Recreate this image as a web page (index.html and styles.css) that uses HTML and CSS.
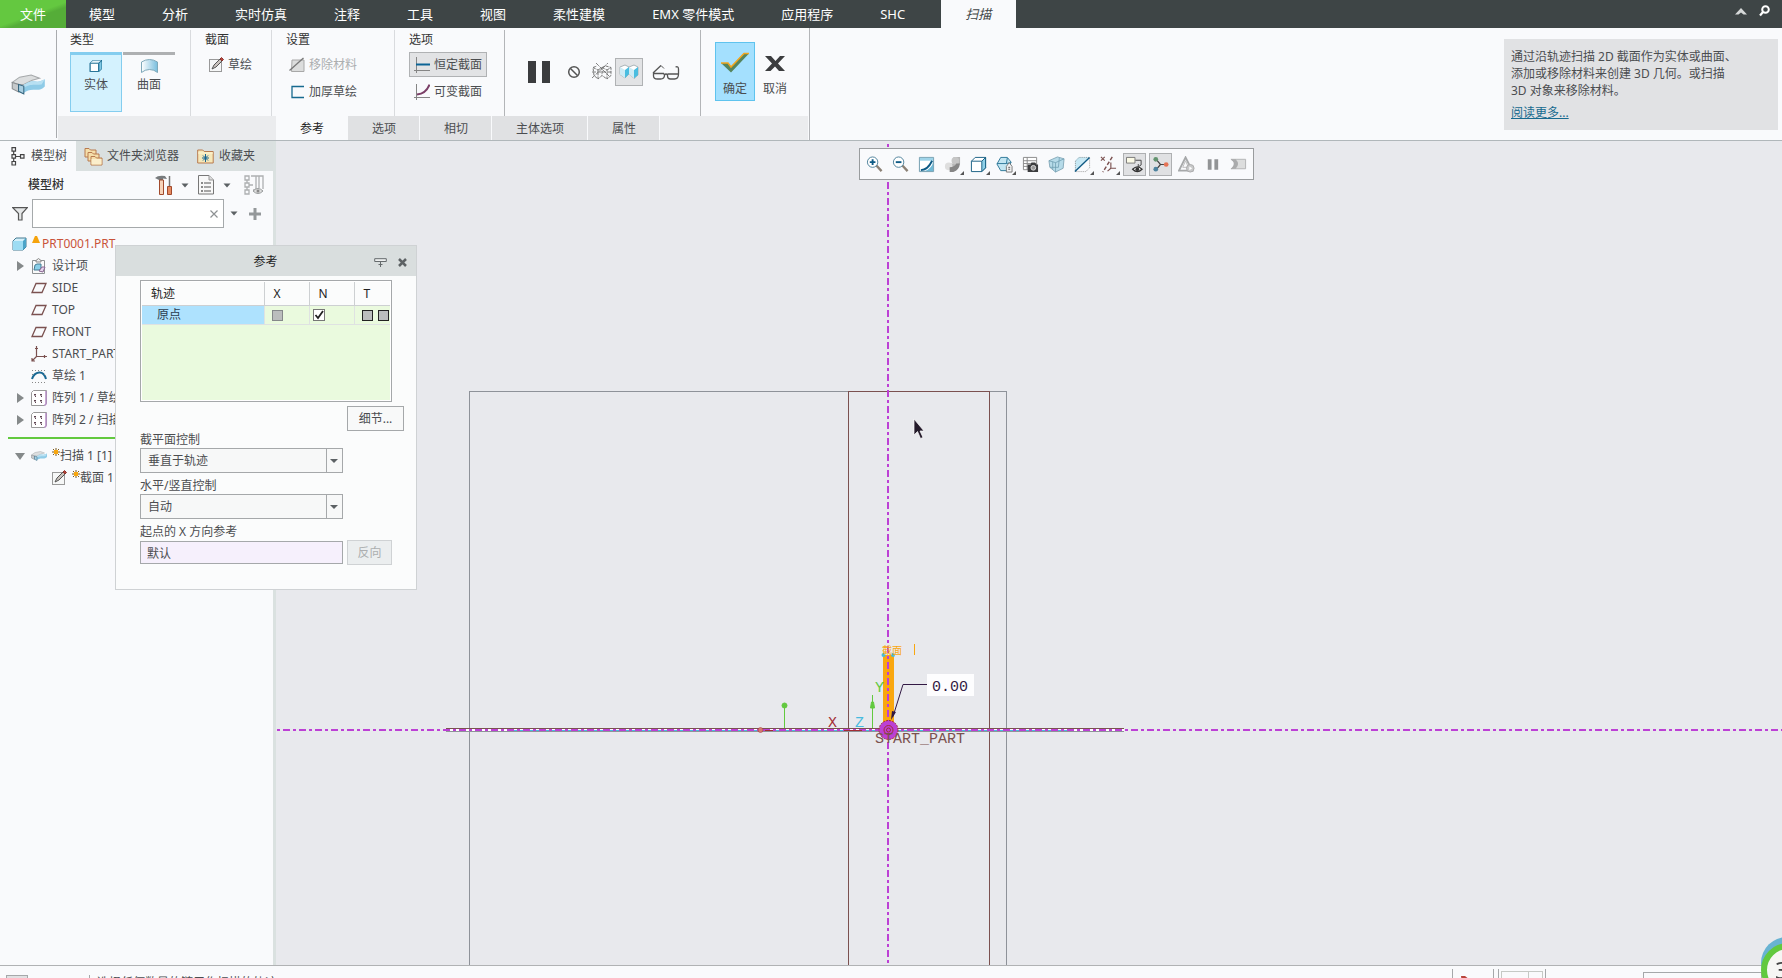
FILE: index.html
```html
<!DOCTYPE html>
<html lang="zh-CN">

<head>
    <meta charset="UTF-8" />
    <meta name="viewport" content="width=device-width, initial-scale=1.0" />
    <title>PRT0001 - 扫描</title>
    <link rel="stylesheet" href="styles.css">
</head>

<body>

    <!-- 公用图标 -->
    <svg class="sprite" aria-hidden="true">
        <symbol id="i-sketch" viewBox="0 0 16 16">
            <rect x="1.500" y="2.500" width="12" height="12" fill="#f6f7f7" stroke="#999" />
            <path d="M4 12l2-4 7-7 2 2-7 7z" fill="#c9c2bd" stroke="#555" />
            <path d="M12 2l1.500-1.500 2 2L14 4z" fill="#b8433a" stroke="#8a332c" />
        </symbol>
        <symbol id="i-sweep" viewBox="0 0 32 20">
            <path d="M1 8l7-5 11-2 8 3-7 2-8 4-5 0z" fill="#dcdedf" stroke="#a5a8aa" />
            <path d="M1 8l6 2v7l-6-3z" fill="#c6cacc" stroke="#8a8d90" />
            <path d="M12 10c3-1 6-4 10-3 4 1 6 0 10-2v7c-4 4-7 3-11 3-4 0-6 1-9 3z" fill="#8fcbe7" />
            <path d="M12 10c3-1 6-4 10-3 4 1 6 0 10-2l-3 5c-6 1-10-1-17 3z" fill="#b8e0f2" />
            <path d="M7 10l5 1.500v7.500l-5-2.500z" fill="#a9cfe2" stroke="#33647e" />
        </symbol>
        <symbol id="i-plane" viewBox="0 0 16 16">
            <path d="M5 3.500h10l-4 9H1z" fill="none" stroke="#7b5150" stroke-width="1.300" />
        </symbol>
        <symbol id="i-pattern" viewBox="0 0 16 16">
            <path d="M.5 2.500l2-2h13v13l-2 2H.5z" fill="#fff" stroke="#999" />
            <path d="M15 1v13l-1.500 1.500" fill="none" stroke="#b58cc4" stroke-width="1.500" />
            <path d="M3 4h2v1.500H3zM9 4h2v1.500H9zM3 10h2v1.500H3zM9 10h2v1.500H9zM4 6h1v1H4zM10 6h1v1h-1zM4 12h1v1H4zM10 12h1v1h-1z" fill="#5d4350" />
        </symbol>
        <symbol id="i-closed" viewBox="0 0 14 14"><path d="M4 2l7 5-7 5z" fill="#85898a" /></symbol>
        <symbol id="i-open" viewBox="0 0 14 14"><path d="M2 4h10l-5 7z" fill="#85898a" /></symbol>
        <symbol id="i-down" viewBox="0 0 8 5"><path d="M.5.5h7L4 4.500z" fill="#5c6164" /></symbol>
        <symbol id="i-star" viewBox="0 0 8 8">
            <path d="M4 0v8M0 4h8M1 1l6 6M7 1L1 7" stroke="#7d5a1c" stroke-width="1" />
            <rect x="2" y="2" width="4" height="4" fill="#f9a70f" />
        </symbol>
    </svg>

    <nav class="menubar">
        <button class="file-tab">文件</button>
        <button class="menu">模型</button>
        <button class="menu">分析</button>
        <button class="menu">实时仿真</button>
        <button class="menu">注释</button>
        <button class="menu">工具</button>
        <button class="menu">视图</button>
        <button class="menu">柔性建模</button>
        <button class="menu">EMX 零件模式</button>
        <button class="menu">应用程序</button>
        <button class="menu">SHC</button>
        <button class="menu active">扫描</button>
        <div class="menubar-tools">
            <button aria-label="最小化功能区"><svg width="12" height="7"><path d="M0 6.500L6 0l6 6.500H8.500L6 4.500l-2.500 2z" fill="#d5d8d8" /></svg></button>
            <button aria-label="搜索"><svg width="11" height="12"><circle cx="6.500" cy="4.500" r="3.300" fill="none" stroke="#fff" stroke-width="2" /><path d="M4 7l-3 3.500" stroke="#fff" stroke-width="2.200" /></svg></button>
        </div>
    </nav>

    <header class="ribbon">
        <div class="feature-icon"><svg width="34" height="21"><use href="#i-sweep" /></svg></div>

        <div class="dashboard">
            <div class="groups">
                <section class="group type-group">
                    <h2>类型</h2>
                    <div class="type-buttons">
                        <button class="type-btn selected">
                            <svg width="14" height="14"><path d="M.7 4L4 1h9v9l-3 3H.7z" fill="#176a8f" /><path d="M1.200 4.200h8.300v8.300H1.200z" fill="#fff" stroke="#2b7699" /><path d="M1.500 3.700L4.200 1.500h8L9.500 3.700z" fill="#e6f4fa" /><path d="M10.300 4.200l2.200-2v7.500l-2.200 2.200z" fill="#80c8e4" /></svg>
                            <span>实体</span>
                        </button>
                        <button class="type-btn">
                            <svg width="17" height="14"><defs><linearGradient id="surf"><stop offset="0" stop-color="#fff" /><stop offset="1" stop-color="#79bede" /></linearGradient></defs><path d="M.5 3Q8.500-2 16.500 3v10.500Q13 10.500 8.500 10.500T.5 13.500z" fill="url(#surf)" stroke="#7fa9ba" /></svg>
                            <span>曲面</span>
                        </button>
                    </div>
                </section>

                <section class="group section-group">
                    <h2>截面</h2>
                    <button class="tool"><svg width="16" height="16"><use href="#i-sketch" /></svg>草绘</button>
                </section>

                <section class="group setting-group">
                    <h2>设置</h2>
                    <button class="tool" disabled><svg width="16" height="16"><path d="M3 3h12v11.500H2.500z" fill="#dcdddd" stroke="#a8a8a8" /><path d="M.5 13.500L14.500 1" stroke="#777" stroke-width="1.300" /></svg>移除材料</button>
                    <button class="tool"><svg width="16" height="16"><path d="M15 2.500H3v11h12" fill="none" stroke="#176a8f" stroke-width="1.300" /></svg>加厚草绘</button>
                </section>

                <section class="group option-group">
                    <h2>选项</h2>
                    <button class="tool pressed"><svg width="16" height="16"><path d="M2.500 0v16M0 13.500h16" stroke="#858585" /><path d="M2 7.500h14" stroke="#0c6496" stroke-width="2" /></svg>恒定截面</button>
                    <button class="tool"><svg width="16" height="16"><path d="M2.500 0v16M0 13.500h16" stroke="#858585" /><path d="M3 10.500q9-1 12.500-10" fill="none" stroke="#7b3f67" stroke-width="2" /></svg>可变截面</button>
                </section>

                <section class="group preview-group">
                    <button aria-label="暂停"><svg width="24" height="24"><path d="M1 1h8v22H1zM15 1h8v22h-8z" fill="#3b3c3e" /></svg></button>
                    <button aria-label="无预览"><svg width="14" height="14"><circle cx="7" cy="7" r="5.300" fill="none" stroke="#555" stroke-width="1.500" /><path d="M3.500 3.500l7 7" stroke="#555" stroke-width="1.500" /></svg></button>
                    <button aria-label="分离"><svg width="20" height="18"><path d="M1 4.500L6 7v9l-4-3.500zM6 7l4-2.500v8L6 16M10 4.500L15 7v9l-5-3.500M15 7l4-2.500v8L15 16M1 4.500L5 3M10 4.500L14 3l5 1.500" fill="none" stroke="#777" stroke-dasharray="3 1" /><path d="M0 15L16 0M4 0l14 14M0 9h20" fill="none" stroke="#626262" stroke-width=".8" stroke-dasharray="4 1" /></svg></button>
                    <button class="pressed" aria-label="连接"><svg width="20" height="16"><path d="M1 3l5-2 4 2v7l-4 4-5-3.500zM10 3l5-2 4 2v8l-4 3.500-5-5z" fill="#fff" stroke="#aab4b8" /><path d="M6 6l4-3v7l-4 4zM15 6l4-3v8l-4 3.500z" fill="#49bde0" /><path d="M1 3l5 3v8l-5-3.500zM10 3l5 3v8l-5-4z" fill="#cdebf5" /></svg></button>
                    <button aria-label="特征预览"><svg width="28" height="16"><path d="M1 9L9 1.500M1.500 9v3q0 3 4 3h3q4 0 4-4l-1-1.500H1.500M15.500 10v2q0 3 3 3h4q4 0 4-5H15.500M12.500 11q1.500-2 3 0M26.500 10V5q0-3-3-2" fill="none" stroke="#555" stroke-width="1.300" /><path d="M9 1.500l3 3" stroke="#555" /></svg></button>
                </section>

                <section class="group confirm-group">
                    <button class="ok-btn"><svg width="30" height="22"><path d="M1 11h7l3 4L24 1.500h5L11 20.500z" fill="#55855d" /><path d="M1 11h7l3 4L24 1.500h5" fill="none" stroke="#f2a51c" stroke-width="1.500" /></svg><span>确定</span></button>
                    <button class="cancel-btn"><svg width="20" height="18"><path d="M0 1h6l4.500 5L15 1h5l-7 7.500L20 16h-6l-4-4.500L5.500 16H0l7-7.500z" fill="#3c3d3f" /></svg><span>取消</span></button>
                </section>
            </div>

            <div class="panel-tabs">
                <button class="active">参考</button>
                <button>选项</button>
                <button>相切</button>
                <button>主体选项</button>
                <button>属性</button>
            </div>
        </div>

        <aside class="help">
            <p>通过沿轨迹扫描 2D 截面作为实体或曲面、添加或移除材料来创建 3D 几何。或扫描 3D 对象来移除材料。</p>
            <a href="#">阅读更多...</a>
        </aside>
    </header>

    <main class="workspace">
        <aside class="navigator">
            <div class="nav-tabs">
                <button class="active"><svg width="14" height="19"><path d="M1 .7h3.500v3.500H1zM1 7.700h3.500v3.500H1zM1 14.500h3.500V18H1zM9.500 7.700H13v3.500H9.500zM4.500 9.500h5M2.700 4.500v3M2.700 11.500v3" fill="none" stroke="#444" stroke-width="1.200" /></svg>模型树</button>
                <button><svg width="19" height="19"><g fill="#f5dfaa" stroke="#b87a4f"><path d="M1 10V1.500h4L6.500 3H12v7z" /><path d="M4 14V5.500h4L9.500 7H15v7z" /><path d="M7 18V9.500h4l1.500 1.500H18v7z" /></g><path d="M7.500 12h10v5.500h-10z" fill="#fbeecb" /></svg>文件夹浏览器</button>
                <button><svg width="17" height="15"><path d="M.7 14V1h5l1.500 1.500h9V14z" fill="#f6e8b9" stroke="#b87a4f" /><path d="M1 4h15" stroke="#fff5d2" /><path d="M8.500 5v8M5 9h7M6 6.500l5 5M11 6.500l-5 5" stroke="#146494" /></svg>收藏夹</button>
            </div>

            <div class="nav-body">
                <div class="tree-bar">
                    <h2>模型树</h2>
                    <button aria-label="设置"><svg width="17" height="21"><path d="M0 3q3-3 10-2l2 3-4-.5V5H4L2 4z" fill="#777b7d" /><path d="M4.500 5h4v14.500h-4z" fill="#f7d3b9" stroke="#a14a2c" /><path d="M14.500 1v11" stroke="#777" stroke-width="1.500" /><path d="M12.500 11.500h4v8h-4z" fill="#e58a60" stroke="#a14a2c" /></svg></button>
                    <button class="caret" aria-label="设置菜单"><svg width="8" height="5"><use href="#i-down" /></svg></button>
                    <button aria-label="显示"><svg width="16" height="20"><path d="M.5.5H11L15.500 5v14H.5z" fill="#f8f8f8" stroke="#777" /><path d="M11 .5V5h4.500" fill="#ddd" stroke="#999" /><path d="M6 8h7M6 12h7M6 16h7" stroke="#555" /><path d="M3 7h2v2H3zM3 11h2v2H3zM3 15h2v2H3z" fill="#888" /></svg></button>
                    <button class="caret" aria-label="显示菜单"><svg width="8" height="5"><use href="#i-down" /></svg></button>
                    <button class="columns" aria-label="树列"><svg width="20" height="20"><path d="M1 1h4v4H1zM1 8h4v4H1zM1 15h4v4H1zM3 5v3M3 12v3M5 10h4M7 1h5v14H9M12 1h7v13M15 1v12" fill="none" stroke="#adb0b1" stroke-width="1.300" /><path d="M9 16q5-5 10 0-5 5-10 0z" fill="#ddd" stroke="#989b9c" /><circle cx="14" cy="16" r="1.500" fill="#888" /></svg></button>
                </div>

                <div class="tree-search">
                    <button aria-label="过滤器"><svg width="16" height="14"><path d="M.7.7h14.600L10 6.500V13H6.500V6.500z" fill="#e5e7e8" stroke="#555" stroke-width="1.200" /></svg></button>
                    <div class="search-box">
                        <input type="text" aria-label="搜索模型树" />
                        <button aria-label="清除"><svg width="8" height="8"><path d="M.5.5l7 7M7.500.5l-7 7" stroke="#8d9193" stroke-width="1.200" /></svg></button>
                    </div>
                    <button class="caret" aria-label="搜索选项"><svg width="8" height="5"><use href="#i-down" /></svg></button>
                    <button class="add" aria-label="添加"><svg width="12" height="12"><path d="M6 0v12M0 6h12" stroke="#94989a" stroke-width="3" /></svg></button>
                </div>

                <ul class="tree">
                    <li class="root"><svg class="icon" viewBox="0 0 16 16"><path d="M2 5l3-3h10v9l-3 3H2z" fill="#d4f0fa" stroke="#447a92" /><path d="M2 5h10v9H2z" fill="#9ddcf3" /><path d="M12 5l3-3v9l-3 3z" fill="#4ba4c8" /></svg><svg class="warn" width="8" height="8"><path d="M3 0h2l3 7H0z" fill="#f5a30d" /></svg>PRT0001.PRT</li>
                    <li><svg class="toggle"><use href="#i-closed" /></svg><svg class="icon" viewBox="0 0 16 16"><path d="M1.500 2.500h12v13h-12z" fill="#fafafa" stroke="#8d9193" /><path d="M5 2.500L7.500.5l2.500 2V4H5z" fill="#eee" stroke="#888" /><path d="M4 7l2-1h4v4l-1.500 2H3z" fill="#8acfe8" stroke="#447a92" /><path d="M8 13l3-4h3l-2 5z" fill="#e7d6ee" stroke="#86648f" /></svg>设计项</li>
                    <li class="leaf"><svg class="icon"><use href="#i-plane" /></svg>SIDE</li>
                    <li class="leaf"><svg class="icon"><use href="#i-plane" /></svg>TOP</li>
                    <li class="leaf"><svg class="icon"><use href="#i-plane" /></svg>FRONT</li>
                    <li class="leaf"><svg class="icon" viewBox="0 0 16 16"><path d="M5.500 0v10.500H16M5.500 10.500L1 15M4 2.500h3M13.500 9v3M1 12v3h3" fill="none" stroke="#7b5150" stroke-width="1.200" /></svg>START_PART_CSYS</li>
                    <li class="leaf"><svg class="icon" viewBox="0 0 16 16"><path d="M1 11Q3 5 8 4.500T15 11" fill="none" stroke="#1a6994" stroke-width="2" /><path d="M1 2.500h14M1 14.500h14M1 6.500h2M13 6.500h2" stroke="#888" stroke-dasharray="1 2" /></svg>草绘 1</li>
                    <li><svg class="toggle"><use href="#i-closed" /></svg><svg class="icon"><use href="#i-pattern" /></svg>阵列 1 / 草绘 2</li>
                    <li><svg class="toggle"><use href="#i-closed" /></svg><svg class="icon"><use href="#i-pattern" /></svg>阵列 2 / 扫描 2</li>
                    <li class="insert-here"></li>
                    <li><svg class="toggle"><use href="#i-open" /></svg><svg class="icon"><use href="#i-sweep" /></svg><svg class="star"><use href="#i-star" /></svg>扫描 1 [1]</li>
                    <li class="sub"><svg class="icon"><use href="#i-sketch" /></svg><svg class="star"><use href="#i-star" /></svg>截面 1</li>
                </ul>
            </div>
        </aside>

        <section class="canvas">
            <svg class="scene" aria-label="模型视图">
                <g transform="translate(-276 -141)">
                    <g fill="none" shape-rendering="crispEdges">
                        <path d="M469.500 970V391.500h537V970" stroke="#8e9299" />
                        <path d="M848.500 970V391.500h141V970" stroke="#7b5150" />
                        <path d="M446 730h678" stroke="#fff" stroke-width="2" />
                        <path d="M510 730.500h560" stroke="#46bbdf" />
                        <path d="M446 728.500h678" stroke="#7b5150" />
                        <path d="M446 731.500h678" stroke="#8e9299" />
                    </g>
                    <path d="M883 655h11v70h-11z" fill="#f9a70f" />
                    <g stroke="#bc40d5" stroke-width="2" stroke-dasharray="7 3 3 3" shape-rendering="crispEdges">
                        <path d="M888 134V970" />
                        <path d="M267 730H4000" />
                    </g>
                    <path d="M765 730.500h8M844 730.500h18" stroke="#a32e35" />
                    <g stroke="#62c93f" fill="#62c93f">
                        <path d="M784.500 705v23M872.500 695v33" />
                        <circle cx="784.500" cy="705.500" r="2.500" />
                        <path d="M871.500 702h2l1 6h-4z" />
                    </g>
                    <circle cx="760.500" cy="730" r="2.500" fill="#d47c70" stroke="#a32e35" stroke-width=".5" />
                    <circle cx="883.500" cy="655" r="2" fill="#46bbdf" />
                    <circle cx="893" cy="655" r="2" fill="#46bbdf" />
                    <circle cx="888.500" cy="730" r="9.500" fill="#bc40d5" stroke="#a32e35" stroke-dasharray="2 1" />
                    <circle cx="888.500" cy="730" r="4.500" fill="none" stroke="#a32e35" />
                    <circle cx="888.500" cy="730" r="2" fill="none" stroke="#a32e35" />
                    <path d="M927 684.500h-24l-10 32" fill="none" stroke="#321944" />
                    <path d="M891 720l1-9 4 1z" fill="#321944" />
                    <path d="M927 674h47v22h-47z" fill="#fdfdfe" />
                    <g class="scene-text">
                        <text x="932" y="691" fill="#321944">0.00</text>
                        <text x="875" y="743" fill="#7b5150">START_PART</text>
                        <text x="828" y="727" fill="#a32e35">X</text>
                        <text x="855" y="727" fill="#46bbdf">Z</text>
                        <text x="875" y="692" fill="#62c93f">Y</text>
                    </g>
                    <g class="scene-label">
                        <text x="882" y="654">截面</text>
                        <path d="M914.500 644v11" stroke="#f9a70f" />
                    </g>
                    <path d="M914 419v16l3.500-3.500 3 7 2.500-1-3-6.500h4z" fill="#241b2b" stroke="#fff" stroke-width=".7" />
                </g>
            </svg>

            <div class="view-bar">
                <button aria-label="放大"><svg viewBox="0 0 18 18"><path d="M11 10l5.500 6" stroke="#8b8175" stroke-width="2.500" /><circle cx="7" cy="6.500" r="5.500" fill="#fff" stroke="#4b8099" /><path d="M7 3.500v6M4 6.500h6" stroke="#0d5a85" stroke-width="2" /></svg></button>
                <button aria-label="缩小"><svg viewBox="0 0 18 18"><path d="M11 10l5.500 6" stroke="#8b8175" stroke-width="2.500" /><circle cx="7" cy="6.500" r="5.500" fill="#fff" stroke="#4b8099" /><path d="M4 6.500h6" stroke="#0d5a85" stroke-width="2" /></svg></button>
                <button aria-label="重画"><svg viewBox="0 0 18 18"><path d="M1.500 1.500h15v15h-15z" fill="#fff" stroke="#6d9aac" /><path d="M2 2h14v3H2z" fill="#9fd4e9" /><path d="M16 6v10H7q8-3 9-10z" fill="#6fb9d6" /><path d="M3 15q7 0 12-10" fill="none" stroke="#0d5a85" stroke-width="2" /></svg></button>
                <button class="more" aria-label="渲染选项"><svg viewBox="0 0 18 18"><path d="M10 1h7v7l-4 4v3H7V8h3z" fill="#b5b5b5" /><circle cx="12" cy="5" r="4" fill="#c6c6c6" /><circle cx="5" cy="11" r="4" fill="#dedede" /><path d="M6 12q5 0 7-4h4q-1 7-7 9H6z" fill="#868686" /></svg></button>
                <button class="more" aria-label="显示样式"><svg viewBox="0 0 18 18"><path d="M1.500 5.500l4-4h11v11l-4 4h-11z" fill="#fff" stroke="#155e82" /><path d="M12.500 5.500l4-4v11l-4 4z" fill="#8ed0e8" stroke="#155e82" /><path d="M1.500 5.500h11" stroke="#155e82" /></svg></button>
                <button class="more" aria-label="已保存方向"><svg viewBox="0 0 18 18"><path d="M5 1.500h7l4 5-4 9H5l-4-7z" fill="#c3e6f2" stroke="#2c7697" /><path d="M1 8h10l5-1M11 8l1-6" fill="none" stroke="#2c7697" /><path d="M11 11l3-4 3 4v6h-6z" fill="#f3f3f3" stroke="#777" /><path d="M13 12h2M13 14h2" stroke="#555" /></svg></button>
                <button aria-label="视图管理器"><svg viewBox="0 0 18 18"><path d="M1.500 1.500h14v13h-14zM1.500 5h14M1.500 8h14M1.500 11h14M5.500 1.500v13" fill="#fff" stroke="#888" /><path d="M6 9h3l1-2h4l1 2h2v8H6z" fill="#3b3c3e" /><circle cx="12" cy="12.500" r="2.500" fill="#999" stroke="#ddd" /></svg></button>
                <button aria-label="透视图"><svg viewBox="0 0 18 18"><path d="M1 5l9-4 7 2-1 10-8 4-6-5z" fill="#b6dbe9" stroke="#85a9b9" /><path d="M1 5l7 2 9-4M8 7v10M5 6v8M12 2l-1 10-9 0" fill="none" stroke="#6d9db1" stroke-width=".8" /></svg></button>
                <button class="more" aria-label="截面"><svg viewBox="0 0 18 18"><path d="M1 15V5l4-4h11z" fill="#c7e8f4" /><path d="M1.500 16.500V5.500l4-4h11v11l-4 4z" fill="none" stroke="#999" stroke-dasharray="1 1" /><path d="M1 16.500L16.500 1.500" stroke="#0d5a85" stroke-width="1.500" /></svg></button>
                <button class="more" aria-label="基准显示过滤器"><svg viewBox="0 0 18 18"><path d="M1 1l4 4M5 1L1 5" stroke="#7b5150" stroke-width="1.200" /><path d="M13 1L3 17" stroke="#7b5150" stroke-width="1.500" stroke-dasharray="4 2" /><path d="M11.500 7v6H17M11.500 13L8 16" fill="none" stroke="#7b5150" stroke-width="1.200" /></svg></button>
                <button class="pressed" aria-label="注释显示"><svg viewBox="0 0 18 18"><path d="M.5 1.500h9v6h-9z" fill="#fbfae6" stroke="#777" /><path d="M10 4.500h6v5l-3 2v-3" fill="none" stroke="#444" /><path d="M7 14q5-5 10 0-5 5-10 0z" fill="#fff" stroke="#333" stroke-width="1.300" /><circle cx="12" cy="14" r="2" fill="#333" /></svg></button>
                <button class="pressed" aria-label="旋转中心"><svg viewBox="0 0 18 18"><path d="M4 3l5 6-5 6M9 9h6" fill="none" stroke="#444" stroke-width="1.300" /><circle cx="4" cy="3.500" r="2.500" fill="#62936f" /><circle cx="4" cy="14" r="2.500" fill="#4e839e" /><circle cx="15" cy="9" r="2.500" fill="#e57355" /></svg></button>
                <button aria-label="仿真" disabled><svg viewBox="0 0 18 18"><path d="M8 1.500L1 15.500h14z" fill="none" stroke="#a6a8a9" stroke-width="2" /><path d="M8 5l-3 7h6z" fill="none" stroke="#bbb" /><circle cx="13" cy="13" r="4" fill="#c8c9ca" stroke="#aaa" /><path d="M12 11l3 2-3 2z" fill="#fff" /></svg></button>
                <button aria-label="暂停仿真" disabled><svg viewBox="0 0 18 18"><path d="M4 3.500h4v11H4zM11 3.500h4v11h-4z" fill="#929496" /></svg></button>
                <button aria-label="结果" disabled><svg viewBox="0 0 18 18"><path d="M1 3.500h15.500v10H1l3-1q4-4 0-7z" fill="#dcdddd" stroke="#b3b4b5" /><path d="M1 3.500h5q5 5 0 10H1q6-5 0-10z" fill="#aaabac" /></svg></button>
            </div>
        </section>

        <form class="dialog">
            <div class="dialog-title">
                <h2>参考</h2>
                <button type="button" aria-label="固定"><svg width="13" height="9"><path d="M.7.7h11.600v2.800H.7z" fill="#eef0f0" stroke="#666b6d" /><path d="M6.500 4v5M4.500 6.500h4" stroke="#666b6d" /></svg></button>
                <button type="button" aria-label="关闭"><svg width="9" height="9"><path d="M1 1l7 7M8 1L1 8" stroke="#5d6264" stroke-width="2.500" /></svg></button>
            </div>
            <div class="dialog-body">
                <div class="trajectories">
                    <table>
                        <thead>
                            <tr><th>轨迹</th><th>X</th><th>N</th><th>T</th></tr>
                        </thead>
                        <tbody>
                            <tr>
                                <td class="picked">原点</td>
                                <td><input class="light" type="checkbox" aria-label="X" disabled /></td>
                                <td><input class="normal" type="checkbox" aria-label="N" checked /></td>
                                <td><input type="checkbox" aria-label="T 1" disabled /><input type="checkbox" aria-label="T 2" disabled /></td>
                            </tr>
                        </tbody>
                    </table>
                </div>
                <button type="button" class="btn details">细节...</button>
                <label for="plane">截平面控制</label>
                <select id="plane"><option>垂直于轨迹</option><option>垂直于投影</option><option>恒定法向</option></select>
                <label for="horiz">水平/竖直控制</label>
                <select id="horiz"><option>自动</option><option>X 轨迹</option></select>
                <label for="xref">起点的 X 方向参考</label>
                <div class="xref">
                    <input id="xref" type="text" value="默认" />
                    <button type="button" class="btn" disabled>反向</button>
                </div>
            </div>
        </form>
    </main>

    <footer class="statusbar">
        <button class="nav-toggle" aria-label="显示导航器"></button>
        <p>选择任何数量的链用作扫描的轨迹。</p>
        <div class="cell flag"><svg width="10" height="12"><path d="M0 0h4l5 4-8 4z" fill="#b8433a" /></svg></div>
        <div class="cell find"><button aria-label="查找"><svg width="10" height="10"><path d="M0 0h4v10H0zM6 0h4v10H6z" fill="#3b3c3e" /></svg></button></div>
        <select aria-label="选择过滤器"></select>
    </footer>

    <button class="assistant" aria-label="助手">3</button>

</body>

</html>
```
FILE: styles.css
```css
* {
    box-sizing: border-box;
}

body {
    display: flex;
    flex-direction: column;
    height: 100vh;
    margin: 0;
    overflow: hidden;
    font: 12px/16px "Noto Sans", "Noto Sans CJK SC", sans-serif;
    color: #4b4d50;
    background-color: #f9fafc;
}

button,
input,
select {
    font: inherit;
    color: inherit;
    margin: 0;
    padding: 0;
    border: none;
    border-radius: 0;
    background: none;
}

svg {
    display: block;
    flex: none;
}

h2,
p {
    margin: 0;
    font-size: 12px;
    font-weight: normal;
}

.sprite {
    position: absolute;
    width: 0;
    height: 0;
}

/* 菜单栏 */
.menubar {
    display: flex;
    flex: none;
    height: 28px;
    background-color: #3e4546;
    color: #fff;
    font-size: 13px;
}

.file-tab {
    padding: 0 20px;
    background: linear-gradient(160deg, #64c840 50%, #55ad38 60%);
}

.menu {
    padding: 0 24px 0 23px;
    white-space: nowrap;
}

.menu.active {
    margin-left: 12px;
    padding: 0 25px 0 24px;
    background-color: #f9fafc;
    color: #3e4546;
    font-style: italic;
}

.menubar-tools {
    display: flex;
    gap: 12px;
    align-items: center;
    height: 22px;
    margin-left: auto;
    padding-right: 12px;
}

/* 功能区 */
.ribbon {
    display: flex;
    flex: none;
    height: 113px;
    border-bottom: 1px solid #b0b7ba;
}

.feature-icon {
    display: flex;
    align-items: center;
    width: 57px;
    margin: 2px 0;
    padding-left: 11px;
    border-right: 1px solid #a9abae;
}

.dashboard {
    display: flex;
    flex-direction: column;
    padding: 2px 1px 0;
    border-right: 1px solid #b3b5b8;
}

.groups {
    display: flex;
    height: 86px;
}

.group {
    position: relative;
    padding: 2px 14px 0;
    border-right: 1px solid #d9dbde;
}

.group h2 {
    height: 20px;
    line-height: 16px;
    color: #333;
    white-space: nowrap;
}

.type-group {
    width: 133px;
    padding: 2px 12px 0;
}

.section-group {
    width: 81px;
}

.setting-group {
    width: 123px;
}

.option-group {
    width: 110px;
    border-color: #b3b5b8;
}

.type-buttons {
    display: flex;
    gap: 1px;
}

.type-btn {
    display: flex;
    flex-direction: column;
    gap: 4px;
    align-items: center;
    width: 52px;
    height: 60px;
    padding-top: 4px;
    border-top: 3px solid #aeb0b2;
}

.type-btn.selected {
    border: 1px solid #84cdef;
    border-top-width: 3px;
    background-color: #d4f2fe;
}

.tool {
    display: flex;
    gap: 4px;
    align-items: center;
    height: 25px;
    margin-bottom: 2px;
    padding: 0 4px;
    border: 1px solid transparent;
    white-space: nowrap;
}

.section-group .tool,
.setting-group .tool {
    padding-left: 2px;
}

.tool:disabled {
    color: #acaeb0;
}

.tool.pressed,
.preview-group .pressed {
    border: 1px solid #b0b2b4;
    background-color: #e2e3e5;
}

.preview-group {
    display: flex;
    align-items: center;
    gap: 11px;
    width: 196px;
    padding: 0 0 2px 22px;
    border-color: #b3b5b8;
}

.preview-group button {
    flex: none;
}

.preview-group button:first-child {
    margin-right: 5px;
}

.preview-group .pressed {
    padding: 5px 3px;
    height: 28px;
    margin: 0 -2px 0 -8px;
}

.confirm-group {
    display: flex;
    gap: 7px;
    width: 107px;
    padding: 12px 0 0 14px;
    border-right: none;
}

.ok-btn,
.cancel-btn {
    display: flex;
    flex-direction: column;
    align-items: center;
    justify-content: space-between;
    height: 59px;
    padding: 10px 5px 3px;
}

.ok-btn {
    padding: 9px 4px 3px;
    border: 1px solid #5fc3ee;
    background-color: #a4e0fe;
}

.cancel-btn {
    padding: 13px 1px 4px;
}

.panel-tabs {
    display: flex;
    height: 24px;
    padding-left: 218px;
    background-color: #ebecee;
}

.panel-tabs button {
    padding: 2px 24px 0;
    height: 24px;
    background-color: #e0e1e3;
    box-shadow: inset -1px 0 #f9fafc;
}

.panel-tabs .active {
    background-color: #f9fafc;
    color: #222;
}

.help {
    width: 274px;
    height: 91px;
    margin: 11px 4px 0 auto;
    padding: 9px 40px 0 7px;
    background-color: #e1e2e4;
    line-height: 17px;
}

.help a {
    display: inline-block;
    margin-top: 5px;
    color: #176a8f;
}

/* 模型树 */
.workspace {
    position: relative;
    display: flex;
    flex: 1;
    min-height: 0;
}

.navigator {
    flex: none;
    width: 276px;
    border-right: 3px solid #dae1e0;
}

.nav-tabs {
    display: flex;
    height: 30px;
    background-color: #dae0e0;
}

.nav-tabs button {
    display: flex;
    align-items: center;
    gap: 4px;
    padding: 0 8px;
    white-space: nowrap;
}

.nav-tabs .active {
    gap: 6px;
    width: 76px;
    padding: 0 0 0 11px;
    background-color: #f9fafc;
}

.nav-tabs button:last-child {
    gap: 5px;
    padding-left: 10px;
}

.tree-bar {
    display: flex;
    align-items: center;
    gap: 9px;
    height: 28px;
    padding: 0 9px 0 28px;
}

.tree-bar h2 {
    margin-right: auto;
    font-weight: 500;
    color: #333;
}

.tree-bar .columns {
    margin-left: 4px;
}

.tree-search {
    display: flex;
    align-items: center;
    height: 29px;
    padding: 0 12px;
}

.search-box {
    display: flex;
    align-items: center;
    width: 194px;
    height: 29px;
    margin: 0 6px 0 4px;
    padding-right: 5px;
    border: 1px solid #a5a9ab;
    background-color: #fff;
}

.search-box input {
    flex: 1;
    min-width: 0;
    outline: none;
}

.tree-search .add {
    margin-left: 11px;
}

.tree {
    margin: 5px 0 0;
    padding: 0;
    list-style: none;
}

.tree li {
    display: flex;
    align-items: center;
    height: 22px;
    padding-left: 13px;
    white-space: nowrap;
}

.tree .toggle {
    width: 14px;
    height: 14px;
    margin-right: 4px;
}

.tree .icon {
    width: 16px;
    height: 16px;
    margin-right: 5px;
}

.tree .star {
    width: 8px;
    height: 8px;
    margin: 0 0 8px 0;
}

.tree .warn {
    margin: 0 2px 9px 0;
}

.tree .root {
    padding-left: 11px;
    color: #c9533a;
}

.tree .leaf {
    padding-left: 31px;
}

.tree .sub {
    padding-left: 51px;
}

.tree .insert-here {
    height: 2px;
    margin: 6px 0 6px 8px;
    background-color: #62c93f;
}

/* 图形窗口 */
.canvas {
    position: relative;
    flex: 1;
    min-width: 0;
    background-color: #e8e9ed;
}

.scene {
    position: absolute;
    width: 100%;
    height: 100%;
}

.scene-text {
    font: 15px "Liberation Mono", monospace;
}

.scene-label {
    font: 10px "Noto Sans CJK SC", sans-serif;
    fill: #f9a70f;
}

.view-bar {
    position: absolute;
    top: 7px;
    left: 583px;
    display: flex;
    align-items: center;
    gap: 3px;
    height: 32px;
    padding: 0 3px;
    border: 1px solid #999c9e;
    background-color: #f9fafc;
}

.view-bar button {
    position: relative;
    padding: 2px;
    border: 1px solid transparent;
}

.view-bar svg {
    width: 17px;
    height: 17px;
}

.view-bar .pressed {
    border-color: #aeb0b2;
    background-color: #e0e1e3;
}

.view-bar .more::after {
    content: "";
    position: absolute;
    right: -1px;
    bottom: 0;
    border: 2px solid #555;
    border-top-color: transparent;
    border-left-color: transparent;
}

/* 参考对话框 */
.dialog {
    position: absolute;
    top: 104px;
    left: 115px;
    width: 302px;
    border: 1px solid #cfd2d4;
    background-color: #fbfcfc;
}

.dialog-title {
    display: flex;
    align-items: center;
    gap: 11px;
    height: 30px;
    padding: 2px 9px 0 0;
    background-color: #d9dede;
}

.dialog-title h2 {
    flex: 1;
    padding-left: 52px;
    text-align: center;
    color: #222;
}

.dialog-body {
    display: flex;
    flex-direction: column;
    padding: 4px 12px 24px 24px;
}

.trajectories {
    width: 252px;
    height: 122px;
    padding: 1px;
    border: 1px solid #a5a8aa;
    background-color: #eafade;
    box-shadow: inset 0 0 0 1px #fff;
}

.trajectories table {
    width: 100%;
    border-collapse: collapse;
    table-layout: fixed;
}

.trajectories th,
.trajectories td {
    width: 45px;
    padding: 0 0 0 7px;
    border-right: 1px solid #dfe2e2;
    border-bottom: 1px solid #dfe2e2;
    text-align: left;
    font-weight: normal;
    white-space: nowrap;
}

.trajectories th {
    height: 23px;
    padding: 2px 0 0 9px;
    border-color: #cdd0d2;
    background-color: #fbfcfc;
    color: #222;
}

.trajectories th:first-child {
    width: 122px;
}

.trajectories tr > :last-child {
    width: auto;
    border-right: none;
}

.trajectories td {
    height: 19px;
}

.trajectories .picked {
    padding-left: 15px;
    background-color: #aee2fe;
    color: #2c3e50;
}

.trajectories input {
    appearance: none;
    display: inline-block;
    width: 11px;
    height: 11px;
    margin-right: 5px;
    border: 1px solid #222;
    background-color: #bbbdbd;
    vertical-align: middle;
}

.trajectories .light {
    border-color: #85888a;
}

.trajectories .normal {
    width: 12px;
    height: 12px;
    margin-left: -4px;
    border-color: #777;
    background: #fff url("data:image/svg+xml,%3Csvg xmlns='http://www.w3.org/2000/svg' viewBox='0 0 10 10'%3E%3Cpath d='M1.500 5l2.500 3 5-7' fill='none' stroke='%23222' stroke-width='1.800'/%3E%3C/svg%3E");
}

.trajectories input:nth-child(2) {
    margin-right: 0;
}

.btn {
    height: 25px;
    border: 1px solid #a5a8aa;
    background-color: #f8f9f9;
}

.btn:disabled {
    border-color: #cfd2d4;
    background-color: #ebeeef;
    color: #acaeb0;
}

.details {
    align-self: flex-end;
    width: 57px;
    margin-top: 4px;
}

.dialog label {
    margin-top: 5px;
}

.dialog .details + label {
    margin-top: 1px;
}

.dialog select {
    appearance: none;
    width: 203px;
    height: 25px;
    padding-left: 7px;
    border: 1px solid #a5a8aa;
    background: #f7f8f8 url("data:image/svg+xml,%3Csvg xmlns='http://www.w3.org/2000/svg' width='16' height='23'%3E%3Cpath d='M.5 0v23' stroke='%23a5a8aa'/%3E%3Cpath d='M4 10h8l-4 4z' fill='%235c6164'/%3E%3C/svg%3E") no-repeat right;
}

.xref {
    display: flex;
    align-items: center;
    gap: 4px;
}

.xref input {
    width: 203px;
    height: 23px;
    padding-left: 6px;
    border: 1px solid #a5a8aa;
    background-color: #f6f0fc;
}

.xref .btn {
    width: 45px;
}

/* 状态栏 (下半部分伸出窗口) */
.statusbar {
    display: flex;
    flex: none;
    height: 32px;
    margin-bottom: -19px;
    padding: 3px 20px 0 6px;
    border-top: 1px solid #b0b2b4;
}

.nav-toggle {
    width: 22px;
    height: 18px;
    margin-top: 6px;
    border: 1px solid #a5a8aa;
    background-color: #e0e1e3;
}

.statusbar p {
    margin: 6px auto 0 61px;
    padding-left: 7px;
    border-left: 1px solid #a5a8aa;
}

.cell {
    border: 1px solid #a5a8aa;
    border-width: 0 1px;
}

.flag {
    width: 42px;
    padding: 7px 0 0 8px;
}

.find {
    width: 48px;
    margin: 0 97px 0 4px;
    padding: 2px;
}

.find button {
    width: 42px;
    height: 22px;
    padding: 4px 0 0 8px;
    border: 1px solid #c5c9c5;
    background: linear-gradient(#c5c9c5, #c5c9c5) no-repeat 26px 0 / 1px 100%;
}

.statusbar select {
    appearance: none;
    width: 119px;
    height: 22px;
    margin-top: 3px;
    border: 1px solid #a5a8aa;
}

.assistant {
    position: fixed;
    right: -33px;
    bottom: -19px;
    width: 54px;
    height: 54px;
    padding-left: 8px;
    border: 6px solid #62c93f;
    border-radius: 50%;
    background-color: #f6f6f4;
    box-shadow: -1px -7px 0 -1px #68b3d2;
    color: #444;
    font-size: 24px;
    text-align: left;
}
```
